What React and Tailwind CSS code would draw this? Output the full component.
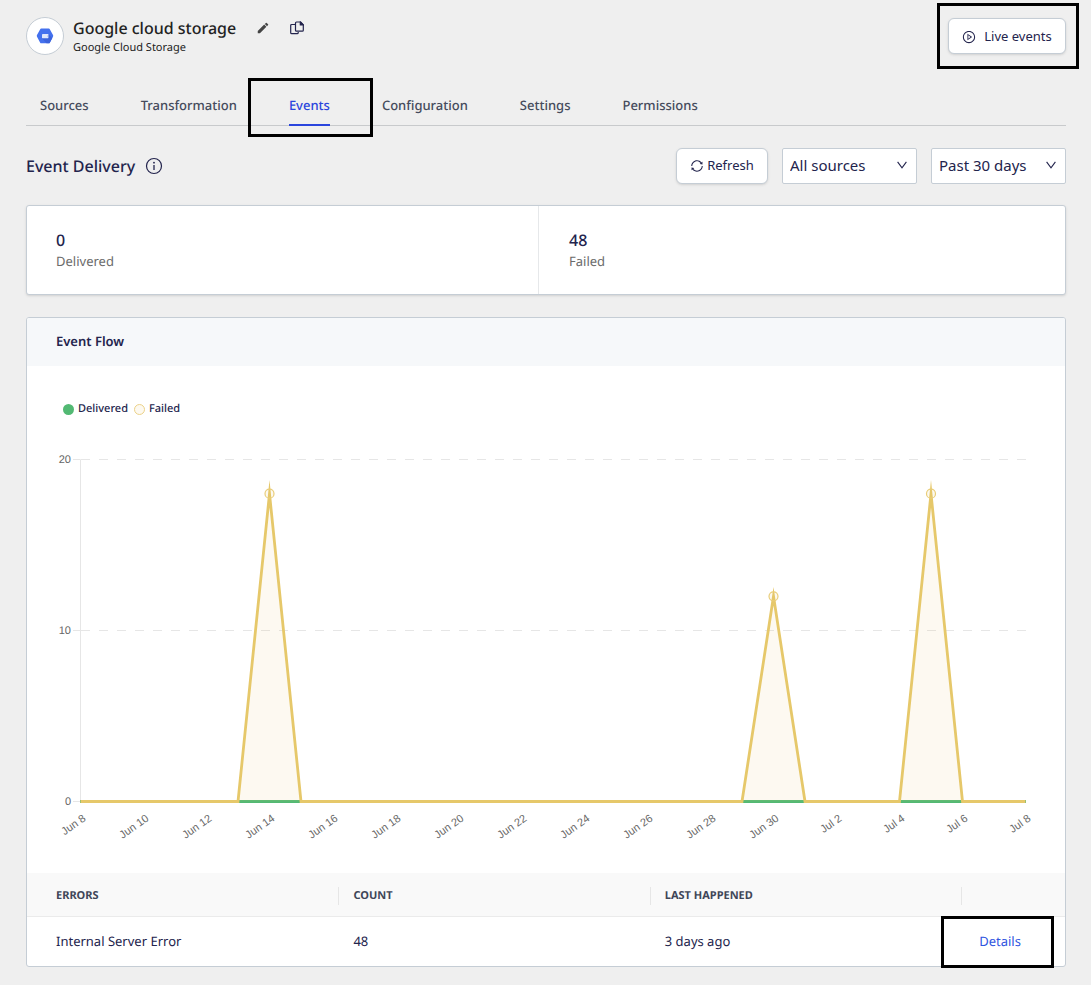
import React from "react";
import { AiOutlinePlayCircle, AiOutlineSync } from "react-icons/ai";
import { MdEdit } from "react-icons/md";

const TABS = ["Sources", "Transformation", "Events", "Configuration", "Settings", "Permissions"];

const LABELS = [
  "Jun 8", "Jun 10", "Jun 12", "Jun 14", "Jun 16", "Jun 18", "Jun 20", "Jun 22",
  "Jun 24", "Jun 26", "Jun 28", "Jun 30", "Jul 2", "Jul 4", "Jul 6", "Jul 8",
];

const FAILED = Array.from({ length: 31 }, () => 0);
FAILED[6] = 18;
FAILED[22] = 12;
FAILED[27] = 18;

const LEFT = 53.5;
const STEP = 31.5;
const BASE = 368.5;
const px = (i) => LEFT + i * STEP;
const py = (v) => BASE - v * 17.1;

function Highlight({ className }) {
  return <span aria-hidden="true" className={`pointer-events-none absolute z-10 border-3 border-black ${className}`} />;
}

function StorageLogo() {
  return (
    <svg viewBox="0 0 18 16" className="h-4 w-[18px]" aria-hidden="true">
      <path d="M5.2.6h7.6c.5 0 .8.2 1 .6L17 7.100c.3.6.3 1.100 0 1.700l-3.200 5.900c-.2.4-.6.6-1 .6H5.200c-.5 0-.8-.2-1-.6L1 8.800c-.3-.6-.3-1.100 0-1.700L4.200 1.200c.2-.4.5-.6 1-.6z" fill="#4471ee" />
      <path d="M12.400 5.900l3.900 4.200-2.500 4.600c-.2.4-.6.6-1 .6h-2.300L6 10.200z" fill="#3c63db" />
      <rect x="6" y="6" width="6.400" height="4.200" rx=".4" fill="#dfe6fb" />
      <rect x="11" y="7.700" width="1" height=".8" fill="#9db3f5" />
    </svg>
  );
}

function CopyIcon() {
  return (
    <svg viewBox="0 0 14 14" className="size-3.5" fill="none" stroke="#23244d" strokeWidth="1.200" strokeLinejoin="round" aria-hidden="true">
      <path d="M6.500 1h4l2.800 2.800v5.400c0 .6-.4 1-1 1H6.500c-.6 0-1-.4-1-1V2c0-.6.4-1 1-1z" />
      <path d="M10.300 1v3h3z" fill="#23244d" />
      <path d="M5.300 3.500H1.700c-.6 0-1 .4-1 1v7.200c0 .6.4 1 1 1h5.500c.6 0 1-.4 1-1V11" />
    </svg>
  );
}

function InfoIcon() {
  return (
    <svg viewBox="0 0 18 18" className="size-[18px]" fill="none" stroke="#23244d" aria-hidden="true">
      <circle cx="9" cy="9" r="7.500" strokeWidth="1.200" />
      <path d="M9 8v5" strokeWidth="1.300" />
      <circle cx="9" cy="5.700" r=".9" fill="#23244d" stroke="none" />
    </svg>
  );
}

function Select({ label, options }) {
  return (
    <div className="relative w-[135px]">
      <select
        aria-label={label}
        className="block h-9 w-full appearance-none rounded-xs border border-[#c5cdd5] bg-white pb-0.5 pl-[7px] pr-7 text-[15px] text-[#23244d]"
      >
        {options.map((o) => (
          <option key={o}>{o}</option>
        ))}
      </select>
      <svg viewBox="0 0 10 8" className="pointer-events-none absolute right-2.5 top-[13px] h-2 w-2.5" fill="none" stroke="#23244d" strokeWidth="1.100" aria-hidden="true">
        <path d="M.6.800 5 6.800 9.400.8" />
      </svg>
    </div>
  );
}

function Chart() {
  const points = FAILED.map((v, i) => `${px(i)},${py(v)}`).join(" ");
  return (
    <svg viewBox="0 0 1038 440" className="block w-full font-['Liberation_Sans',sans-serif]" role="img" aria-label="Event flow">
      <g stroke="#e6e6e6" strokeWidth="1">
        {[0, 10, 20].map((v) => (
          <path key={v} d={`M46 ${py(v)}H${LEFT}`} />
        ))}
        <path d={`M${LEFT} ${py(20)}V${BASE}`} />
        {[10, 20].map((v) => (
          <path key={v} d={`M54 ${py(v)}H999`} strokeDasharray="9 9" />
        ))}
      </g>
      <path d={`M53 ${BASE}H999`} stroke="#52b973" strokeWidth="3" />
      <polygon points={`${points} ${px(30)},${BASE} ${px(0)},${BASE}`} fill="#ecc873" fillOpacity="0.1" />
      <polyline points={points} fill="none" stroke="#e6c86a" strokeWidth="2.800" strokeMiterlimit="20" />
      {FAILED.map((v, i) =>
        v > 0 ? (
          <circle key={i} cx={px(i)} cy={py(v)} r="4.500" fill="#e6c86a" fillOpacity="0.1" stroke="#e9cd78" strokeWidth="1.200" />
        ) : null
      )}
      <g fill="#666" fontSize="11" textAnchor="end">
        {[0, 10, 20].map((v) => (
          <text key={v} x="44" y={py(v) + 3.5}>{v}</text>
        ))}
        {LABELS.map((t, i) => (
          <text key={t} transform={`translate(${px(i * 2) + 6} 387) rotate(-35)`}>{t}</text>
        ))}
      </g>
    </svg>
  );
}

export default function App() {
  return (
    <main className="min-h-screen bg-[#efefef] pb-[18px] pl-[26px] pr-[25px] pt-[17px] font-['Noto_Sans',sans-serif] text-[13px] text-[#23244d] [text-rendering:geometricPrecision]">
      <header className="flex items-start justify-between">
        <div className="flex">
          <div className="flex size-[38px] items-center justify-center rounded-full border border-[#c5cdd5] bg-white">
            <StorageLogo />
          </div>
          <div className="ml-[9px] text-[#222]">
            <div className="flex h-[22px] items-center">
              <h1 className="text-base font-medium">Google cloud storage</h1>
              <button type="button" aria-label="Edit name" className="ml-5 text-[#444]">
                <MdEdit className="size-3.5" />
              </button>
              <button type="button" aria-label="Copy" className="ml-5">
                <CopyIcon />
              </button>
            </div>
            <p className="text-[11px] leading-[18px]">Google Cloud Storage</p>
          </div>
        </div>
        <div className="relative mt-px">
          <button type="button" className="flex h-9 w-[118px] items-center justify-center gap-2 rounded-md border border-[#c5cdd5] bg-white pt-px shadow-sm">
            <AiOutlinePlayCircle className="size-3.5" />
            Live events
          </button>
          <Highlight className="-left-[11px] -right-[13px] -inset-y-[15px]" />
        </div>
      </header>

      <nav className="mt-[29px] flex h-10 gap-[52px] border-b border-[#c8cacc] pl-3.5 font-medium text-[#454b5c]">
        {TABS.map((t) =>
          t === "Events" ? (
            <div key={t} className="relative">
              <a href="#events" aria-current="page" className="flex h-10 items-center border-b-2 border-[#2a45dd] pt-0.5 text-[#2a45dd]">
                {t}
              </a>
              <Highlight className="-left-[41px] -right-[43px] -top-2 h-[59px]" />
            </div>
          ) : (
            <a key={t} href={`#${t.toLowerCase()}`} className="flex h-10 items-center">
              {t}
            </a>
          )
        )}
      </nav>

      <div className="mt-[22px] flex items-center justify-between">
        <div className="flex items-center gap-2.5">
          <h2 className="text-base font-medium">Event Delivery</h2>
          <InfoIcon />
        </div>
        <div className="flex gap-3.5">
          <button type="button" className="flex h-9 w-[92px] items-center justify-center gap-[3px] rounded-md border border-[#c5cdd5] bg-white shadow-sm">
            <AiOutlineSync className="size-3.5" />
            Refresh
          </button>
          <Select label="Source" options={["All sources"]} />
          <Select label="Period" options={["Past 30 days"]} />
        </div>
      </div>

      <section className="mt-[21px] flex h-[90px] rounded-[3px] border border-[#c5cdd5] bg-white shadow-sm">
        {[["0", "Delivered"], ["48", "Failed"]].map(([n, label], i) => (
          <div key={label} className={i ? "flex-1 border-l border-[#e6e8ea] pl-[30px] pt-[23px]" : "w-[511px] pl-[29px] pt-[23px]"}>
            <p className="text-base leading-[22px] font-medium">{n}</p>
            <p className="leading-5 text-[#6b6b6b]">{label}</p>
          </div>
        ))}
      </section>

      <section className="mt-[22px] rounded-[3px] border border-[#c5cdd5] bg-white">
        <h3 className="flex h-12 items-center rounded-t-[2px] bg-[#f6f8fa] px-[29px] font-semibold">Event Flow</h3>
        <div className="flex h-[67px] items-end gap-1.5 pl-9 text-[11px] font-medium leading-[18px]">
          <span className="flex h-[33px] items-start gap-1">
            <i className="mt-1 size-[11px] rounded-full bg-[#52b973]" />
            <span>Delivered</span>
          </span>
          <span className="flex h-[33px] items-start gap-1">
            <i className="mt-1 size-[11px] rounded-full border border-[#ecd288] bg-[#fdf9f0]" />
            <span>Failed</span>
          </span>
        </div>
        <Chart />
        <table className="w-full table-fixed border-collapse text-left">
          <thead>
            <tr className="h-[43px] border-b border-[#ebebeb] bg-[#f9f9f9] text-[11px] text-[#3f4658]">
              <th className="w-[30%] pl-[29px] pt-1 font-bold">ERRORS</th>
              <th className="w-[30%] pt-1 font-bold"><div className="border-l border-[#e6e6e6] pl-3.5 leading-[18px]">COUNT</div></th>
              <th className="w-[30%] pt-1 font-bold"><div className="border-l border-[#e6e6e6] pl-3.5 leading-[18px]">LAST HAPPENED</div></th>
              <th className="pt-1"><div className="h-[18px] border-l border-[#e6e6e6]" /></th>
            </tr>
          </thead>
          <tbody>
            <tr className="h-[50px]">
              <td className="pl-[29px]">Internal Server Error</td>
              <td className="pl-[15px]">48</td>
              <td className="pl-[15px]">3 days ago</td>
              <td className="pl-[18px]">
                <span className="relative inline-block">
                  <a href="#details" className="text-[#2f55e0]">Details</a>
                  <Highlight className="-left-[38px] -right-[33px] -top-4 -bottom-[17px]" />
                </span>
              </td>
            </tr>
          </tbody>
        </table>
      </section>
    </main>
  );
}
